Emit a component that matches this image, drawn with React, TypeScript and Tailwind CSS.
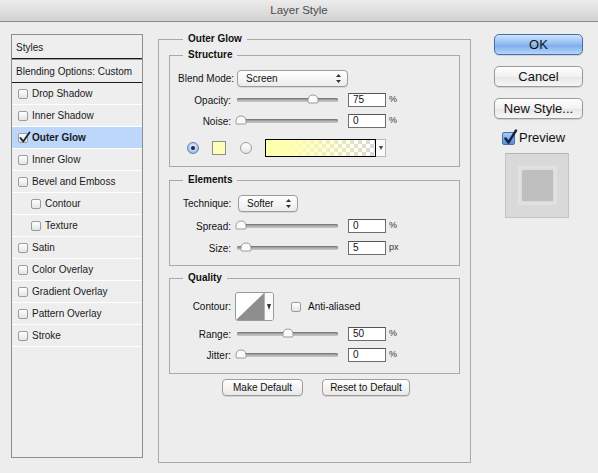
import React from "react";

const font = { fontFamily: '"Liberation Sans", Arial, sans-serif' };

const styleRows: { label: string; indent?: boolean; checked?: boolean }[] = [
  { label: "Drop Shadow" },
  { label: "Inner Shadow" },
  { label: "Outer Glow", checked: true },
  { label: "Inner Glow" },
  { label: "Bevel and Emboss" },
  { label: "Contour", indent: true },
  { label: "Texture", indent: true },
  { label: "Satin" },
  { label: "Color Overlay" },
  { label: "Gradient Overlay" },
  { label: "Pattern Overlay" },
  { label: "Stroke" },
];

function Check({ checked, size = 10 }: { checked?: boolean; size?: number }) {
  return (
    <span
      className="relative inline-block shrink-0 rounded-[2px] border border-[#9b9b9b] bg-[linear-gradient(#ffffff,#e4e4e4)]"
      style={{ width: size, height: size }}
    >
      {checked && (
        <svg className="absolute -top-[3px] -left-[1px]" width={size + 3} height={size + 3} viewBox="0 0 13 13" fill="none">
          <path d="M2.5 7 5.2 10.5 11.5 1.5" stroke="#1d2a4a" strokeWidth="2" strokeLinecap="round" strokeLinejoin="round" />
        </svg>
      )}
    </span>
  );
}

function StylesPanel() {
  return (
    <div className="w-[132px] h-[424px] border border-[#8f8f8f] bg-[#eeeeee] flex flex-col text-[10px] text-[#1a1a1a]">
      <div className="h-[24px] flex items-center pl-[4px] pt-[2px] border-b border-[#1a1a1a]">Styles</div>
      <div className="h-[24px] flex items-center pl-[4px] pt-[1px] border-t border-[#9a9a9a] border-b border-b-[#1a1a1a]">
        Blending Options: Custom
      </div>
      {styleRows.map((r) => (
        <div
          key={r.label}
          className={`h-[22px] flex items-center gap-[4px] border-b border-white ${
            r.checked ? "bg-[#bcd7fa] font-bold" : ""
          } ${r.indent ? "pl-[19px]" : "pl-[6px]"}`}
        >
          <Check checked={r.checked} />
          <span>{r.label}</span>
        </div>
      ))}
    </div>
  );
}

function Group({ title, className, children }: { title: string; className?: string; children: React.ReactNode }) {
  return (
    <fieldset className={`border border-[#a9a9a9] ${className ?? ""}`}>
      <legend className="ml-[13px] px-[5px] text-[10px] font-bold leading-[12px]">{title}</legend>
      {children}
    </fieldset>
  );
}

function Label({ children }: { children: React.ReactNode }) {
  return <div className="w-[61px] shrink-0 text-right text-[10px]">{children}</div>;
}

function Select({ value, width }: { value: string; width: number }) {
  return (
    <div
      className="h-[17px] flex items-center justify-between rounded-[4px] border border-[#9c9c9c] bg-[linear-gradient(#ffffff,#ececec)] pl-[8px] pr-[6px] text-[10px] shadow-[0_1px_0_#d6d6d6]"
      style={{ width }}
    >
      <span>{value}</span>
      <svg width="5" height="9" viewBox="0 0 5 9">
        <path d="M2.5 0 5 3H0Z M2.5 9 5 6H0Z" fill="#333" />
      </svg>
    </div>
  );
}

function Slider({ pct }: { pct: number }) {
  return (
    <div className="relative w-[101px] h-[14px] flex items-center">
      <div className="w-full h-[4px] rounded-full bg-[linear-gradient(#8f8f8f,#c9c9c9)] shadow-[inset_0_1px_1px_#777]" />
      <svg
        className="absolute top-[1px]"
        style={{ left: `calc(${pct}% - 6px)` }}
        width="12"
        height="10"
        viewBox="0 0 12 10"
      >
        <path d="M1 6.5Q1 1 6 1Q11 1 11 6.5L11 8Q11 9 10 9L2 9Q1 9 1 8Z" fill="#fbfbfb" stroke="#9a9a9a" />
      </svg>
    </div>
  );
}

function Field({ value }: { value: string }) {
  return (
    <div className="w-[38px] h-[14px] border border-[#6e6e6e] border-t-[#555] bg-white pl-[4px] text-[10px] leading-[12px]">
      {value}
    </div>
  );
}

function SliderRow({ label, pct, value, unit }: { label: string; pct: number; value: string; unit: string }) {
  return (
    <div className="h-[14px] flex items-center">
      <Label>{label}</Label>
      <div className="ml-[6px]">
        <Slider pct={pct} />
      </div>
      <div className="ml-[10px]">
        <Field value={value} />
      </div>
      <span className="ml-[3px] text-[9px] text-[#333]">{unit}</span>
    </div>
  );
}

function Radio({ on }: { on?: boolean }) {
  return on ? (
    <span className="w-[12px] h-[12px] shrink-0 rounded-full border border-[#5a7fb5] bg-[radial-gradient(circle_at_50%_35%,#e6f0fb,#8db2e3)] flex items-center justify-center">
      <span className="w-[4px] h-[4px] rounded-full bg-[#1c2a44]" />
    </span>
  ) : (
    <span className="block w-[12px] h-[12px] shrink-0 rounded-full border border-[#9c9c9c] bg-[linear-gradient(#ffffff,#e6e6e6)]" />
  );
}

function MacButton({ children, width }: { children: React.ReactNode; width: number }) {
  return (
    <div
      className="h-[17px] flex items-center justify-center rounded-[4px] border border-[#9d9d9d] bg-[linear-gradient(#ffffff,#e9e9e9)] text-[10px] shadow-[0_1px_0_#d4d4d4]"
      style={{ width }}
    >
      {children}
    </div>
  );
}

function MainPanel() {
  return (
    <fieldset className="w-[313px] h-[430px] border border-[#a9a9a9] px-[10px]">
      <legend className="ml-[14px] px-[5px] text-[10px] font-bold leading-[12px]">Outer Glow</legend>

      <Group title="Structure" className="mt-[4px] h-[118px]">
        <div className="pt-[9px] flex flex-col">
          <div className="h-[16px] flex items-center">
            <div className="w-[67px] shrink-0 pl-[8px] text-[10px]">Blend Mode:</div>
            <Select value="Screen" width={111} />
          </div>
          <div className="mt-[7px]">
            <SliderRow label="Opacity:" pct={75} value="75" unit="%" />
          </div>
          <div className="mt-[7px]">
            <SliderRow label="Noise:" pct={4} value="0" unit="%" />
          </div>
          <div className="mt-[11px] h-[18px] flex items-center pl-[17px]">
            <Radio on />
            <span className="ml-[13px] w-[14px] h-[14px] border border-[#8d8d8d] bg-[#ffffb9]" />
            <span className="ml-[14px]">
              <Radio />
            </span>
            <div className="ml-[13px] flex items-stretch h-[18px]">
              <div className="w-[111px] border border-black bg-[repeating-conic-gradient(#d9d9d9_0_25%,#ffffff_0_50%)] bg-[length:8px_8px]">
                <div className="w-full h-full bg-[linear-gradient(to_right,#ffffb0,#ffffb0_20%,rgba(255,255,176,0))]" />
              </div>
              <div className="w-[10px] flex items-center justify-center border border-l-0 border-[#b9b9b9] bg-[#fafafa]">
                <svg width="4" height="4" viewBox="0 0 4 4">
                  <path d="M0 0H4L2 4Z" fill="#444" />
                </svg>
              </div>
            </div>
          </div>
        </div>
      </Group>

      <Group title="Elements" className="mt-[7px] h-[92px]">
        <div className="pt-[9px] flex flex-col">
          <div className="h-[17px] flex items-center">
            <div className="w-[68px] shrink-0 pl-[13px] text-[10px]">Technique:</div>
            <Select value="Softer" width={60} />
          </div>
          <div className="mt-[7px]">
            <SliderRow label="Spread:" pct={4} value="0" unit="%" />
          </div>
          <div className="mt-[8px]">
            <SliderRow label="Size:" pct={9} value="5" unit="px" />
          </div>
        </div>
      </Group>

      <Group title="Quality" className="mt-[6px] h-[102px]">
        <div className="pt-[8px] flex flex-col">
          <div className="h-[29px] flex items-center">
            <Label>Contour:</Label>
            <div className="ml-[4px] flex h-[29px] rounded-[3px] border border-[#9a9a9a] bg-white overflow-hidden">
              <svg width="28" height="27" viewBox="0 0 28 27">
                <path d="M0 27 28 0V27Z" fill="#8e8e8e" />
              </svg>
              <div className="w-[9px] flex items-center justify-center border-l border-[#b5b5b5] bg-[#fafafa]">
                <svg width="4" height="6" viewBox="0 0 4 6">
                  <path d="M0 0H4L2 6Z" fill="#333" />
                </svg>
              </div>
            </div>
            <span className="ml-[17px]">
              <Check />
            </span>
            <span className="ml-[7px] text-[10px]">Anti-aliased</span>
          </div>
          <div className="mt-[6px]">
            <SliderRow label="Range:" pct={50} value="50" unit="%" />
          </div>
          <div className="mt-[7px]">
            <SliderRow label="Jitter:" pct={4} value="0" unit="%" />
          </div>
        </div>
      </Group>

      <div className="mt-[5px] flex justify-center gap-[19px] pl-[3px]">
        <MacButton width={81}>Make Default</MacButton>
        <MacButton width={88}>Reset to Default</MacButton>
      </div>
    </fieldset>
  );
}

function SideButton({ children, primary }: { children: React.ReactNode; primary?: boolean }) {
  return (
    <div
      className={`w-[89px] h-[21px] flex items-center justify-center rounded-[5px] border text-[13px] ${
        primary
          ? "border-[#4a6fa8] bg-[linear-gradient(#cfe3fb,#8fbaf0_50%,#77aaed_51%,#b6d6fb)]"
          : "border-[#9a9a9a] bg-[linear-gradient(#ffffff,#f1f1f1_50%,#e6e6e6_51%,#f6f6f6)]"
      } shadow-[0_1px_1px_#cfcfcf]`}
    >
      {children}
    </div>
  );
}

export default function App() {
  return (
    <div className="w-[598px] h-[473px] bg-[#ededed] text-[#111] overflow-hidden" style={font}>
      <div className="h-[22px] flex items-center justify-center border-b border-[#8b8b8b] bg-[linear-gradient(#ececec,#d2d2d2)] text-[11.5px] text-[#4b4b4b]">
        Layer Style
      </div>
      <div className="flex items-start pl-[11px]">
        <div className="mt-[12px]">
          <StylesPanel />
        </div>
        <div className="mt-[11px] ml-[15px]">
          <MainPanel />
        </div>
        <div className="mt-[12px] ml-[23px] flex flex-col">
          <SideButton primary>OK</SideButton>
          <div className="mt-[11px]">
            <SideButton>Cancel</SideButton>
          </div>
          <div className="mt-[11px]">
            <SideButton>New Style...</SideButton>
          </div>
          <div className="mt-[12px] ml-[8px] h-[14px] flex items-center gap-[4px]">
            <span className="relative w-[13px] h-[13px] rounded-[2px] border border-[#4b6fa5] bg-[linear-gradient(#a9cdf7,#4e8ee0)]">
              <svg className="absolute -top-[4px] left-0" width="15" height="16" viewBox="0 0 15 16" fill="none">
                <path d="M2.5 9.5 5.5 13.5 13 1.5" stroke="#14213d" strokeWidth="2.4" strokeLinecap="round" strokeLinejoin="round" />
              </svg>
            </span>
            <span className="text-[13px]">Preview</span>
          </div>
          <div className="mt-[8px] ml-[11px] w-[64px] h-[65px] border border-[#c4c4c4] border-t-[#b5b5b5] bg-[#d9d9d9] flex items-center justify-center">
            <div className="w-[39px] h-[39px] bg-[#e1e1e1] flex items-center justify-center">
              <div className="w-[31px] h-[31px] bg-[#bfbfbf] shadow-[0_0_2px_#d0d0d0]" />
            </div>
          </div>
        </div>
      </div>
    </div>
  );
}
